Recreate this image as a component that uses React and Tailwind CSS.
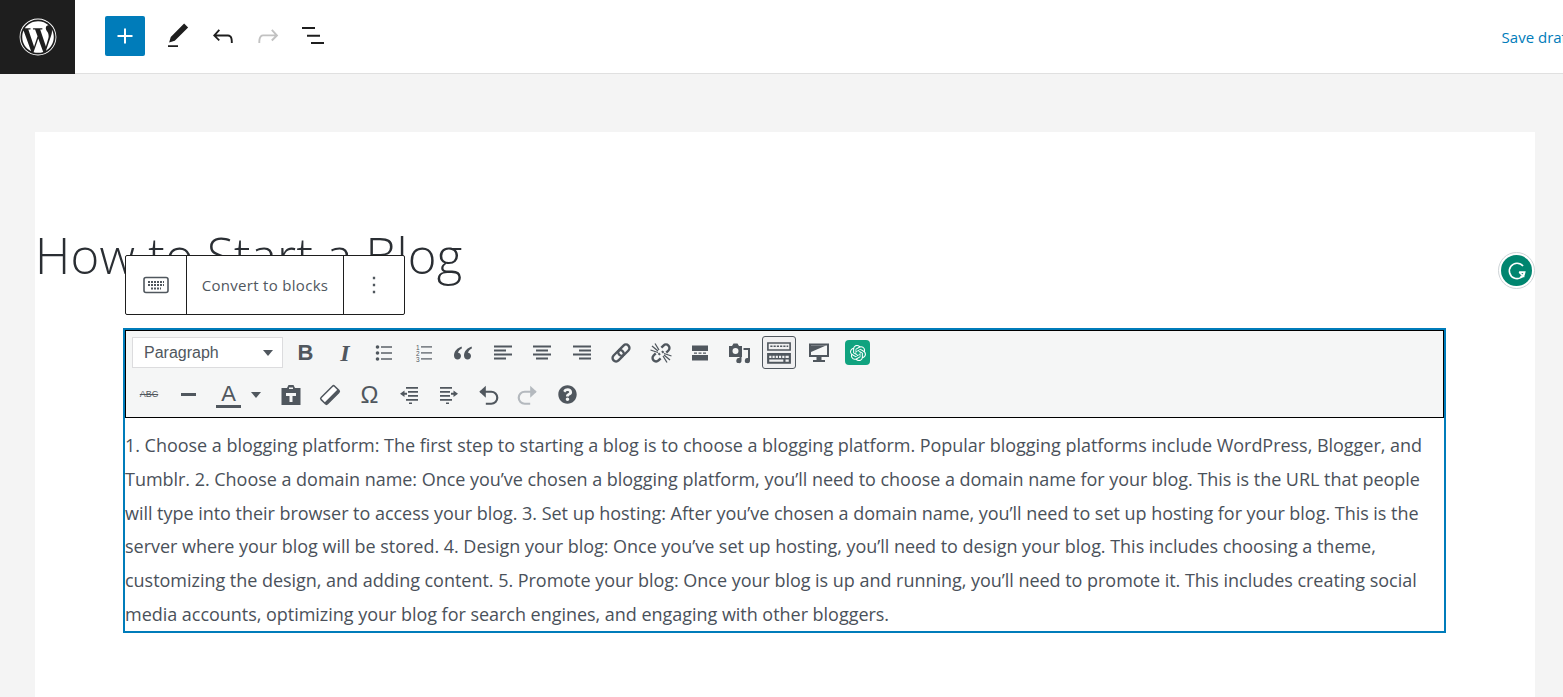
import React from "react";
import { FaWordpress, FaQuestionCircle } from "react-icons/fa";
import { SiOpenai } from "react-icons/si";

const lines = [
  "1. Choose a blogging platform: The first step to starting a blog is to choose a blogging platform. Popular blogging platforms include WordPress, Blogger, and",
  "Tumblr. 2. Choose a domain name: Once you’ve chosen a blogging platform, you’ll need to choose a domain name for your blog. This is the URL that people",
  "will type into their browser to access your blog. 3. Set up hosting: After you’ve chosen a domain name, you’ll need to set up hosting for your blog. This is the",
  "server where your blog will be stored. 4. Design your blog: Once you’ve set up hosting, you’ll need to design your blog. This includes choosing a theme,",
  "customizing the design, and adding content. 5. Promote your blog: Once your blog is up and running, you’ll need to promote it. This includes creating social",
  "media accounts, optimizing your blog for search engines, and engaging with other bloggers.",
];

function Icon({ children, size = 30, className = "" }) {
  return (
    <svg width={size} height={size} viewBox="0 0 24 24" fill="currentColor" className={className}>
      {children}
    </svg>
  );
}

function Btn({ children, active, className = "" }) {
  return (
    <div
      className={`flex h-[33px] w-[34px] items-center justify-center rounded-[3px] text-[#50575e] ${
        active ? "border border-[#50575e] bg-[#f0f0f1] text-[#1d2327]" : ""
      } ${className}`}
    >
      {children}
    </div>
  );
}

function Align({ type }) {
  const x = type === "left" ? 1 : type === "center" ? 4 : 7;
  return (
    <svg width="20" height="20" viewBox="0 0 20 20" fill="currentColor">
      <rect x="1" y="2.5" width="18" height="2" />
      <rect x={x} y="6.5" width="12" height="2" />
      <rect x="1" y="10.5" width="18" height="2" />
      <rect x={x} y="14.5" width="12" height="2" />
    </svg>
  );
}

function BulList() {
  return (
    <svg width="20" height="20" viewBox="0 0 20 20" fill="currentColor">
      <circle cx="3.5" cy="4" r="1.8" />
      <circle cx="3.5" cy="10" r="1.8" />
      <circle cx="3.5" cy="16" r="1.8" />
      <rect x="7" y="3.3" width="11" height="1.4" />
      <rect x="7" y="9.3" width="11" height="1.4" />
      <rect x="7" y="15.3" width="11" height="1.4" />
    </svg>
  );
}

function NumList() {
  return (
    <svg width="20" height="20" viewBox="0 0 20 20" fill="currentColor">
      <rect x="7" y="3.3" width="11" height="1.2" />
      <rect x="7" y="9.3" width="11" height="1.2" />
      <rect x="7" y="15.3" width="11" height="1.2" />
      <text x="2" y="7" fontSize="6.5" fontFamily="Liberation Sans, sans-serif">1</text>
      <text x="2" y="13" fontSize="6.5" fontFamily="Liberation Sans, sans-serif">2</text>
      <text x="2" y="19" fontSize="6.5" fontFamily="Liberation Sans, sans-serif">3</text>
    </svg>
  );
}

function Quote() {
  return (
    <svg width="22" height="22" viewBox="0 0 22 22" fill="currentColor">
      <path d="M9.5 4.5C5.5 6 2 9 2 13.5 2 16 3.6 17.5 5.6 17.5s3.4-1.5 3.4-3.4-1.3-3.2-3-3.3c.4-1.7 1.9-3.5 4-4.6z" />
      <path d="M19.5 4.5c-4 1.5-7.5 4.5-7.5 9 0 2.5 1.6 4 3.6 4s3.4-1.5 3.4-3.4-1.3-3.2-3-3.3c.4-1.7 1.9-3.5 4-4.6z" />
    </svg>
  );
}

function LinkIcon() {
  return (
    <svg width="24" height="24" viewBox="0 0 24 24" fill="none" stroke="currentColor" strokeWidth="2.4">
      <g transform="rotate(-45 12 12)">
        <rect x="1.5" y="8.5" width="13" height="7" rx="3.5" />
        <rect x="9.5" y="8.5" width="13" height="7" rx="3.5" />
      </g>
    </svg>
  );
}

function UnlinkIcon() {
  return (
    <svg width="24" height="24" viewBox="0 0 24 24" fill="none" stroke="currentColor">
      <g transform="rotate(-45 12 12)" strokeWidth="2.4">
        <path d="M8 8.5H5a3.5 3.5 0 0 0 0 7h3M11 11.5H9" />
        <path d="M16 8.5h3a3.5 3.5 0 0 1 0 7h-3M13 12.5h2" />
      </g>
      <path d="M3 5l6 5M6 2.5l4 6.5M1.5 9L9 11.5M21 19l-6-5M18 21.5l-4-6.5M22.5 15L15 12.5" strokeWidth="1.3" />
    </svg>
  );
}

function MoreIcon() {
  return (
    <svg width="20" height="20" viewBox="0 0 20 20" fill="currentColor">
      <path d="M2 2.5h16v5.5H2zM2 12h16v5.5H2z" />
      <path d="M4 9.4h3v1.3H4zM8.5 9.4h3v1.3h-3zM13 9.4h3v1.3h-3z" />
    </svg>
  );
}

function MediaIcon() {
  return (
    <svg width="24" height="24" viewBox="0 0 24 24" fill="currentColor">
      <path fillRule="evenodd" d="M1 5h3l1.5-2.5h4L11 5h3v11H1zM7.5 7a3 3 0 1 0 0 6 3 3 0 0 0 0-6z" />
      <path d="M15.5 7H22v12.5a2.6 2.6 0 1 1-2-2.5V9h-4.5z" />
      <path d="M13.5 13v6.5a2.6 2.6 0 1 1-2-2.5v-2h2z" />
    </svg>
  );
}

function KitchenIcon() {
  return (
    <svg width="26" height="26" viewBox="0 0 24 24" fill="currentColor">
      <path fillRule="evenodd" d="M1 2h22v8H1zM2.5 3.5v5h19v-5z" />
      <path d="M4 5h2v1.5H4zM7 5h2v1.5H7zM10 5h2v1.5h-2zM13 5h2v1.5h-2zM16 5h2v1.5h-2zM19 5h1.5v1.5H19z" />
      <path fillRule="evenodd" d="M1 12h22v10H1zM3 14.5v2h2v-2zM6 14.5v2h2v-2zM9 14.5v2h2v-2zM12 14.5v2h2v-2zM15 14.5v2h2v-2zM18 14.5v2h3v-2zM3 18v2h13v-2zM18 18v2h3v-2z" />
    </svg>
  );
}

function MonitorIcon() {
  return (
    <svg width="22" height="22" viewBox="0 0 22 22" fill="currentColor">
      <path fillRule="evenodd" d="M1 1.5h20V15H1zM3 3.5V13h16V3.5z" />
      <path d="M3 3.5h15L3 10zM8.5 15h5v3h3.5v2H5v-2h3.5z" />
    </svg>
  );
}

function PasteIcon() {
  return (
    <svg width="22" height="22" viewBox="0 0 22 22" fill="currentColor">
      <path d="M1.5 4H7l1.5-3h5L15 4h5.5v17h-19z" />
      <path d="M9 3.5h4v1.5H9zM6 9h10v3h-3.5v6h-3v-6H6z" fill="#f5f6f6" />
    </svg>
  );
}

function EraserIcon() {
  return (
    <svg width="22" height="22" viewBox="0 0 22 22">
      <g transform="rotate(-45 11 11)">
        <rect x="1.5" y="6.5" width="19" height="9" rx="1.5" fill="#ffffff" stroke="currentColor" strokeWidth="1.5" />
        <path d="M1.5 12.5h19v1.5a1.5 1.5 0 0 1-1.5 1.5H3a1.5 1.5 0 0 1-1.5-1.5z" fill="currentColor" />
      </g>
    </svg>
  );
}

function KeyboardSmall() {
  return (
    <svg width="26" height="18" viewBox="0 0 26 18" fill="none" stroke="currentColor">
      <rect x="1" y="1.5" width="24" height="15" rx="2" strokeWidth="1.6" />
      <path d="M5 6h16M5 9h16M8 12.5h10" strokeWidth="1.8" strokeDasharray="2 1" />
    </svg>
  );
}

export default function App() {
  return (
    <div className="relative h-[697px] overflow-hidden bg-[#f4f4f4] font-['Open_Sans',sans-serif]">
      {/* top bar */}
      <div className="flex h-[74px] items-start border-b border-[#e0e0e0] bg-white">
        <div className="flex h-[74px] w-[75px] items-center justify-center bg-[#1e1e1e] text-white">
          <FaWordpress size={38} />
        </div>
        <div className="ml-[30px] mt-[16px] flex h-10 w-10 items-center justify-center rounded-[2px] bg-[#007cba] text-white">
          <Icon>
            <path d="M18 11.2h-5.2V6h-1.6v5.2H6v1.6h5.2V18h1.6v-5.2H18z" />
          </Icon>
        </div>
        <div className="ml-[18px] mt-[21px] flex gap-[15px] text-[#1e1e1e]">
          <Icon>
            <path d="M20.1 5.1L16.9 2 6.2 12.7l-1.3 4.4 4.5-1.3L20.1 5.1zM4 20.8h8v-1.5H4v1.5z" />
          </Icon>
          <Icon>
            <path d="M18.3 11.7c-.6-.6-1.4-.9-2.3-.9H6.7l2.9-3.3-1.1-1-4.5 5L8.5 16l1-1-2.7-2.7H16c.5 0 .9.2 1.3.5 1 1 1 3.4 1 4.5v.3h1.5v-.2c0-1.5 0-4.3-1.5-5.7z" />
          </Icon>
          <Icon className="text-[#c2c2c2]">
            <path d="M15.6 6.5l-1.1 1 2.9 3.3H8c-.9 0-1.7.3-2.3.9-1.4 1.5-1.4 4.2-1.4 5.6v.2h1.5v-.3c0-1.1 0-3.5 1-4.5.3-.3.7-.5 1.3-.5h9.2L14.5 15l1.1 1.1 4.6-4.6-4.6-5z" />
          </Icon>
          <svg width="30" height="30" viewBox="0 0 30 30" fill="currentColor">
            <path d="M4 6h13v2H4zM9 13.7h13v2H9zM13 21h13v2H13z" />
          </svg>
        </div>
        <div className="ml-auto mr-[-9px] mt-[27px] whitespace-nowrap text-[15px] leading-[20px] text-[#007cba]">Save draft</div>
      </div>

      {/* editor canvas */}
      <div className="relative ml-[35px] mt-[58px] h-[600px] w-[1500px] bg-white">
        <h1 className="pt-[92px] text-[49px] font-light leading-[62px] tracking-[0.3px] text-[#2a2e33]">
          How to Start a Blog
        </h1>

        <div className="ml-[88px] mt-[42px] h-[305px] w-[1323px] border-2 border-[#007cba]">
          <div className="h-[88px] border border-black bg-[#f5f6f6] px-[6px] pt-[5px]">
            <div className="flex items-center gap-[5.47px]">
              <div className="flex h-[31px] w-[151px] items-center justify-between border border-[#dcdcde] bg-white pl-[11px] pr-[9px] font-['Liberation_Sans',sans-serif] text-[16px] text-[#50575e]">
                Paragraph
                <span className="h-0 w-0 border-x-[5px] border-t-[6px] border-x-transparent border-t-[#50575e]" />
              </div>
              <Btn>
                <span className="font-['Liberation_Sans',sans-serif] text-[22px] font-bold">B</span>
              </Btn>
              <Btn>
                <span className="font-['Liberation_Serif',serif] text-[24px] font-bold italic">I</span>
              </Btn>
              <Btn><BulList /></Btn>
              <Btn><NumList /></Btn>
              <Btn><Quote /></Btn>
              <Btn><Align type="left" /></Btn>
              <Btn><Align type="center" /></Btn>
              <Btn><Align type="right" /></Btn>
              <Btn><LinkIcon /></Btn>
              <Btn><UnlinkIcon /></Btn>
              <Btn><MoreIcon /></Btn>
              <Btn><MediaIcon /></Btn>
              <Btn active><KitchenIcon /></Btn>
              <Btn><MonitorIcon /></Btn>
              <div className="ml-[4px] flex h-[25px] w-[25px] items-center justify-center rounded-[4px] bg-[#10a37f] text-white">
                <SiOpenai size={16} />
              </div>
            </div>

            <div className="mt-[9px] flex items-center gap-[5.5px]">
              <Btn>
                <span className="font-['Liberation_Sans',sans-serif] text-[9px] line-through">ABC</span>
              </Btn>
              <Btn>
                <span className="h-[3px] w-[15px] bg-current" />
              </Btn>
              <div className="flex h-[33px] w-[57px] items-center text-[#50575e]">
                <div className="ml-[5px] flex w-[25px] flex-col items-center">
                  <span className="font-['Liberation_Sans',sans-serif] text-[22px] leading-[23px]">A</span>
                  <span className="h-[3px] w-[25px] bg-current" />
                </div>
                <span className="ml-[10px] h-0 w-0 border-x-[5px] border-t-[6px] border-x-transparent border-t-[#50575e]" />
              </div>
              <Btn><PasteIcon /></Btn>
              <Btn><EraserIcon /></Btn>
              <Btn>
                <span className="font-['Liberation_Sans',sans-serif] text-[24px] leading-[24px]">Ω</span>
              </Btn>
              <Btn>
                <svg width="20" height="20" viewBox="0 0 20 20" fill="currentColor">
                  <path d="M7 2h12v1.8H7zM9 6h10v1.8H9zM9 10h10v1.8H9zM7 14h12v1.8H7zM10 17.5h3V19h-3zM1 8.8L5.5 5.5v2.3H8v2H5.5v2.3z" />
                </svg>
              </Btn>
              <Btn>
                <svg width="20" height="20" viewBox="0 0 20 20" fill="currentColor">
                  <path d="M1 2h12v1.8H1zM1 6h10v1.8H1zM1 10h10v1.8H1zM1 14h12v1.8H1zM7 17.5h3V19H7zM19 8.8l-4.5-3.3v2.3H12v2h2.5v2.3z" />
                </svg>
              </Btn>
              <Btn>
                <svg width="24" height="24" viewBox="0 0 22 22" fill="none" stroke="currentColor" strokeWidth="2">
                  <path d="M4 8h10a5 5 0 0 1 0 11H9" />
                  <path d="M9 2.5L3 8l6 5.5" fill="currentColor" stroke="none" />
                </svg>
              </Btn>
              <Btn className="text-[#b4b9be]">
                <svg width="24" height="24" viewBox="0 0 22 22" fill="none" stroke="currentColor" strokeWidth="2">
                  <path d="M18 8H8a5 5 0 0 0 0 11h5" />
                  <path d="M13 2.5L19 8l-6 5.5" fill="currentColor" stroke="none" />
                </svg>
              </Btn>
              <Btn><FaQuestionCircle size={19} /></Btn>
            </div>
          </div>

          <div className="pt-[11px] text-[18px] leading-[33.8px] tracking-[-0.03px] text-[#4a515a]">
            {lines.map((line) => (
              <div key={line} className="whitespace-nowrap">
                {line}
              </div>
            ))}
          </div>
        </div>

        {/* block toolbar over the title */}
        <div className="absolute left-[90px] top-[123px] flex h-[60px] w-[280px] items-stretch rounded-[2px] border border-[#1e1e1e] bg-white text-[#50575e]">
          <div className="flex w-[61px] items-center justify-center border-r border-[#1e1e1e]">
            <KeyboardSmall />
          </div>
          <div className="flex w-[157px] items-center justify-center border-r border-[#1e1e1e] text-[15px] tracking-[0.3px]">
            Convert to blocks
          </div>
          <div className="flex flex-1 items-center justify-center">
            <Icon size={28}>
              <path d="M13 19h-2v-2h2v2zm0-6h-2v-2h2v2zm0-6h-2V5h2v2z" />
            </Icon>
          </div>
        </div>
      </div>

      {/* grammarly badge */}
      <div className="absolute left-[1498px] top-[252px] flex h-[37px] w-[37px] items-center justify-center rounded-full border border-[#cfd5d8] bg-white">
        <div className="flex h-[31px] w-[31px] items-center justify-center rounded-full bg-[#00856f] text-white">
          <svg width="22" height="22" viewBox="0 0 20 20" fill="none" stroke="currentColor" strokeWidth="1.5">
            <path d="M15.5 5.5A7 7 0 1 0 17 11h-5" />
            <path d="M12 11l4 4M16 12v3h-3" />
          </svg>
        </div>
      </div>
    </div>
  );
}
